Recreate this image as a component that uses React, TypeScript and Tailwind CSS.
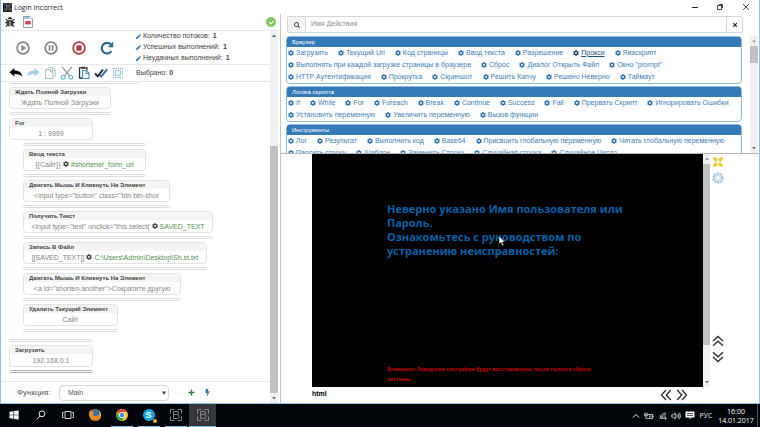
import type { ReactNode } from "react";
import clsx from "clsx";
import { FaBolt, FaBug, FaCheck, FaCog, FaPen, FaPlus, FaSearch, FaTimes } from "react-icons/fa";

type StepData = {
  title: string;
  value: string;
  target?: string;
  width: string;
};

type ActionItem = {
  label: string;
  hovered?: boolean;
};

type ActionGroup = {
  title: string;
  rows: ActionItem[][];
};

const loopSteps: StepData[] = [
  { title: "Ввод текста", value: "{{Сайт}}", target: "#shortener_form_url", width: "w-[123px]" },
  { title: "Двигать Мышь И Кликнуть На Элемент", value: '<input type="button" class="btn btn-shor', width: "w-[147px]" },
  { title: "Получить Текст", value: '<input type="text" onclick="this.select(', target: "SAVED_TEXT", width: "w-[190px]" },
  { title: "Запись В Файл", value: "[[SAVED_TEXT]]", target: "C:\\Users\\Admin\\Desktop\\Sh.st.txt", width: "w-[184px]" },
  { title: "Двигать Мышь И Кликнуть На Элемент", value: '<a id="shorten-another">Сократите другую', width: "w-[158px]" },
  { title: "Удалить Текущий Элемент", value: "Сайт", width: "w-[95px]" },
];

const groups: ActionGroup[] = [
  {
    title: "Браузер",
    rows: [
      [
        { label: "Загрузить" },
        { label: "Текущий Url" },
        { label: "Код страницы" },
        { label: "Ввод текста" },
        { label: "Разрешение" },
        { label: "Прокси", hovered: true },
        { label: "Яваскрипт" },
      ],
      [
        { label: "Выполнять при каждой загрузке страницы в браузере" },
        { label: "Сброс" },
        { label: "Диалог Открыть Файл" },
        { label: 'Окно "prompt"' },
      ],
      [
        { label: "HTTP Аутентификация" },
        { label: "Прокрутка" },
        { label: "Скриншот" },
        { label: "Решить Капчу" },
        { label: "Решено Неверно" },
        { label: "Таймаут" },
      ],
    ],
  },
  {
    title: "Логика скрипта",
    rows: [
      [
        { label: "If" },
        { label: "While" },
        { label: "For" },
        { label: "Foreach" },
        { label: "Break" },
        { label: "Continue" },
        { label: "Success" },
        { label: "Fail" },
        { label: "Прервать Скрипт" },
        { label: "Игнорировать Ошибки" },
      ],
      [{ label: "Установить переменную" }, { label: "Увеличить переменную" }, { label: "Вызов функции" }],
    ],
  },
  {
    title: "Инструменты",
    rows: [
      [
        { label: "Лог" },
        { label: "Результат" },
        { label: "Выполнить код" },
        { label: "Base64" },
        { label: "Присвоить глобальную переменную" },
        { label: "Читать глобальную переменную" },
      ],
      [
        { label: "Парсить строку" },
        { label: "Шаблон" },
        { label: "Заменить Строку" },
        { label: "Случайная строка" },
        { label: "Случайное Число" },
      ],
    ],
  },
];

const stats = [
  { label: "Количество потоков:", value: 1 },
  { label: "Успешных выполнений:", value: 1 },
  { label: "Неудачных выполнений:", value: 1 },
];

function IconButton({ label, className, children }: { label: string; className?: string; children: ReactNode }) {
  return (
    <button type="button" aria-label={label} className={clsx("flex shrink-0 items-center justify-center", className)}>
      {children}
    </button>
  );
}

function Scrollbar({ before, thumb, after, dim }: { before: string; thumb: string; after: string; dim?: boolean }) {
  return (
    <div className="flex h-full w-full flex-col items-center bg-[#f1f1f1]">
      <svg viewBox="0 0 8 8" className={clsx("my-px size-2 shrink-0", dim ? "fill-gray-400" : "fill-gray-600")}>
        <path d="M4 2.5 6 5H2z" />
      </svg>
      <div className={before} />
      <div className={clsx("w-full bg-[#c1c1c1]", thumb)} />
      <div className={after} />
      <svg viewBox="0 0 8 8" className="my-px size-2 shrink-0 fill-gray-500">
        <path d="M4 5.5 6 3H2z" />
      </svg>
    </div>
  );
}

function AppMark({ className }: { className?: string }) {
  return (
    <svg viewBox="0 0 14 14" fill="none" stroke="currentColor" className={className}>
      <path d="M1.5 5.5v-4h4M8.500 1.500h4v4M12.500 8.500v4h-4M5.500 12.500h-4v-4" />
      <path d="M4.500 3.500h3.500q1.500 0 1.500 1.500t-1.500 1.500H4.500zM4.500 6.500h4q1.500 0 1.500 2t-1.500 2h-4z" />
    </svg>
  );
}

function TitleBar() {
  return (
    <header className="flex h-3.5 shrink-0 items-center bg-white pl-0.5">
      <span className="flex size-[9px] items-center justify-center bg-[#1b1b1b] text-gray-400">
        <AppMark className="size-2" />
      </span>
      <h1 className="ml-0.5 flex-1 font-['Open_Sans'] text-[7px] leading-none text-gray-800">Login Incorrect</h1>
      <div className="flex text-gray-800">
        <IconButton label="Свернуть" className="w-[25px]">
          <svg viewBox="0 0 8 8" className="size-2" fill="none" stroke="currentColor">
            <path d="M1 4.5h6" />
          </svg>
        </IconButton>
        <IconButton label="Развернуть" className="w-[25px]">
          <svg viewBox="0 0 8 8" className="size-2" fill="none" stroke="currentColor">
            <path d="M1.5 2.5h4v4h-4zM3 1.5h3.5V5" strokeWidth="0.9" />
          </svg>
        </IconButton>
        <IconButton label="Закрыть" className="w-[27px]">
          <svg viewBox="0 0 8 8" className="size-2" fill="none" stroke="currentColor">
            <path d="m1 1 6 6M7 1 1 7" strokeWidth="0.8" />
          </svg>
        </IconButton>
      </div>
    </header>
  );
}

function PlaybackControls() {
  return (
    <div className="flex flex-1 items-center gap-3">
      <IconButton label="Запустить" className="size-4">
        <svg viewBox="0 0 16 16" className="size-4" fill="none" stroke="#858585" strokeWidth="1.7">
          <circle cx="8" cy="8" r="5.9" />
          <path d="M6.3 4.8v6.4L11.3 8z" fill="#858585" stroke="none" />
        </svg>
      </IconButton>
      <IconButton label="Пауза" className="size-4">
        <svg viewBox="0 0 16 16" className="size-4" fill="none" stroke="#858585" strokeWidth="1.7">
          <circle cx="8" cy="8" r="5.9" />
          <path d="M6.5 5.2v5.6M9.5 5.2v5.6" />
        </svg>
      </IconButton>
      <IconButton label="Остановить" className="size-4">
        <svg viewBox="0 0 16 16" className="size-4" fill="none" stroke="#b23a3a" strokeWidth="1.7">
          <circle cx="8" cy="8" r="5.9" />
          <path d="M5.4 5.4h5.2v5.2H5.4z" fill="#b23a3a" stroke="none" />
        </svg>
      </IconButton>
      <IconButton label="Перезапустить" className="size-4">
        <svg viewBox="0 0 16 16" className="size-4" fill="none" stroke="#2b6d8c" strokeWidth="2.2">
          <path d="M12.4 11.2A5.3 5.3 0 1 1 11.8 4.4" />
          <path d="M14.2 1.6v5.6H8.8z" fill="#2b6d8c" stroke="none" />
        </svg>
      </IconButton>
    </div>
  );
}

function EditControls() {
  return (
    <div className="flex flex-1 items-center gap-[3px]">
      <IconButton label="Отменить">
        <svg viewBox="0 0 14 12" className="h-3 w-3.5 fill-black">
          <path d="M.4 5.2 5.4 1v2.6c4 0 7.2 1.4 8 6.4-1.6-2.3-4-3-8-2.9v2.5z" />
        </svg>
      </IconButton>
      <IconButton label="Повторить">
        <svg viewBox="0 0 14 12" className="h-3 w-3.5 fill-[#a5d0e2]">
          <path d="M13.6 5.2 8.6 1v2.6c-4 0-7.2 1.4-8 6.4 1.6-2.3 4-3 8-2.9v2.5z" />
        </svg>
      </IconButton>
      <IconButton label="Копировать">
        <svg viewBox="0 0 14 14" className="size-3.5" fill="none" stroke="#b9c3c9">
          <path d="M5 3.500v-2h4.500l3 3v6h-2M9.500 1.500v3h3" />
          <path d="M2.500 3.500h5l2.500 2.500v6.500h-7.500zM7.500 3.500V6H10" stroke="#a9bfca" />
        </svg>
      </IconButton>
      <IconButton label="Вырезать">
        <svg viewBox="0 0 14 14" className="size-3.5" fill="none">
          <path d="m2.2.8 7.2 9M11.8.8l-7.2 9" stroke="#8d8d8d" strokeWidth="1.1" />
          <circle cx="3.2" cy="11.2" r="1.9" stroke="#6cb3da" strokeWidth="1.2" />
          <circle cx="10.8" cy="11.2" r="1.9" stroke="#6cb3da" strokeWidth="1.2" />
        </svg>
      </IconButton>
      <IconButton label="Вставить">
        <svg viewBox="0 0 14 14" className="size-3.5" fill="none">
          <path d="M5 12H2.5V1.8H10V4" stroke="#333" strokeWidth="1.3" />
          <path d="M4.3.8h4v1.8h-4z" fill="#333" />
          <path d="M5.5 4.5h4L12 7v5.500H5.5z" fill="#fff" stroke="#3f8fbb" strokeWidth="1.2" />
          <path d="M9 4.5v3h3" stroke="#3f8fbb" />
        </svg>
      </IconButton>
      <IconButton label="Проверить">
        <svg viewBox="0 0 14 14" className="size-3.5" fill="none" strokeWidth="1.9">
          <path d="m1 7.3 2.8 3L9 3.5" stroke="#222" />
          <path d="m5.8 9.2 1.4 1.4 6-7.5" stroke="#2e6f9e" />
        </svg>
      </IconButton>
      <IconButton label="Выделить всё">
        <svg viewBox="0 0 14 14" className="size-3.5" fill="none">
          <path d="M2.5 2.5h9v9h-9z" stroke="#8fa6b5" strokeDasharray="1.2 1" />
          <path d="M4.5 4.5h5v5h-5z" fill="#e6f3fa" stroke="#9fcbe2" />
        </svg>
      </IconButton>
    </div>
  );
}

function Connector({ width, active }: { width: string; active?: boolean }) {
  return (
    <div
      className={clsx("h-[3px] shrink-0 rounded-sm border bg-white", width, active ? "border-[#b3b3b3]" : "border-[#dcdcdc]")}
    />
  );
}

function StepCard({ title, value, target, width }: StepData) {
  return (
    <div className={clsx("flex h-[22px] shrink-0 flex-col overflow-hidden rounded-sm border border-[#e3e3e3] bg-white", width)}>
      <p className="h-2 shrink-0 bg-[#f4f4f4] pl-[5px] text-[6px] leading-2 font-bold whitespace-nowrap text-[#444]">{title}</p>
      <p className="flex flex-1 items-center justify-center gap-0.5 text-[7px] leading-none whitespace-nowrap text-[#858585]">
        <span>{value}</span>
        {target && (
          <>
            <FaCog className="size-1.5 text-[#444]" />
            <span className="text-[#519051]">{target}</span>
          </>
        )}
      </p>
    </div>
  );
}

function Script() {
  return (
    <div className="flex min-h-0 flex-1 flex-col overflow-hidden pl-2">
      <div className="-mt-px flex flex-col gap-[3px]">
        <Connector width="w-[131px]" />
        <StepCard title="Ждать Полной Загрузки" value="Ждать Полной Загрузки" width="w-[102px]" />
        <Connector width="w-[102px]" />
        <StepCard title="For" value="1 : 9999" width="w-[84px]" />
        <div className="mb-1 ml-3.5 flex flex-col gap-[3px]">
          <Connector width={loopSteps[0].width} />
          {loopSteps.map((step, i) => (
            <div key={i} className="flex flex-col gap-[3px]">
              <StepCard {...step} />
              <Connector width={step.width} />
            </div>
          ))}
        </div>
        <Connector width="w-[84px]" />
        <StepCard title="Загрузить" value="192.168.0.1" width="w-[84px]" />
        <Connector width="w-[84px]" active />
      </div>
    </div>
  );
}

function FunctionBar() {
  return (
    <div className="flex h-[22px] shrink-0 items-center border-t border-gray-200 pl-4">
      <label htmlFor="function" className="w-[42px] text-[8px] text-[#555]">
        Функция:
      </label>
      <div className="relative">
        <select
          id="function"
          className="block h-4 w-[110px] appearance-none rounded-sm border border-gray-300 bg-white pt-px pl-2 text-[7px] text-[#555]"
        >
          <option>Main</option>
        </select>
        <svg viewBox="0 0 6 6" className="pointer-events-none absolute top-[5px] right-0.5 size-1.5 fill-gray-700">
          <path d="M1 1.5h4L3 5z" />
        </svg>
      </div>
      <IconButton label="Добавить функцию" className="ml-4 w-3">
        <FaPlus className="size-[7px] text-[#2f7a35]" />
      </IconButton>
      <IconButton label="Вызвать функцию" className="ml-1 w-3">
        <FaBolt className="size-[7px] text-[#2f79bd]" />
      </IconButton>
    </div>
  );
}

function ScriptPanel() {
  return (
    <aside className="flex w-[280px] shrink-0 flex-col border-r border-[#c4c4c4]">
      <div className="flex h-[17px] shrink-0 items-center gap-2 border-b border-gray-200 pr-1 pl-1">
        <IconButton label="Отладка">
          <FaBug className="size-[10px] text-[#333]" />
        </IconButton>
        <IconButton label="Журнал">
          <svg viewBox="0 0 10 12" className="h-3 w-2.5" fill="none">
            <path d="M.5.5H7L9.500 3v8.500h-9z" fill="#f7fafc" stroke="#8ca3b5" />
            <path d="M1 1h5.500v2H1z" fill="#a9c3d8" />
            <path d="M2.3 5h5.400v3.400H2.300z" fill="#cf4650" />
          </svg>
        </IconButton>
        <span className="ml-auto flex size-[10px] items-center justify-center rounded-full bg-[#84c55f]">
          <FaCheck className="size-[5px] text-white" />
        </span>
      </div>
      <div className="flex min-h-0 flex-1 pr-0.5">
        <div className="flex min-w-0 flex-1 flex-col">
          <div className="flex h-[34px] shrink-0 items-center border-b border-gray-200 pl-3.5">
            <PlaybackControls />
            <ul className="w-[134px]">
              {stats.map((stat) => (
                <li key={stat.label} className="flex h-[11px] items-center gap-0.5 text-[7px] text-[#444]">
                  <FaPen className="size-[5px] text-[#3d7fb5]" />
                  <span>{stat.label}</span>
                  <b className="ml-px">{stat.value}</b>
                </li>
              ))}
            </ul>
          </div>
          <div className="flex h-[17px] shrink-0 items-center border-b border-gray-200 pl-2">
            <EditControls />
            <p className="w-[134px] text-[7px] text-[#444]">
              Выбрано: <b>0</b>
            </p>
          </div>
          <Script />
          <FunctionBar />
        </div>
        <div className="w-2 shrink-0">
          <Scrollbar before="grow-[105]" thumb="grow-[247]" after="grow-0" />
        </div>
      </div>
    </aside>
  );
}

function ActionCard({ title, rows }: ActionGroup) {
  return (
    <section className="shrink-0 rounded-sm border border-[#8db9de] bg-white">
      <h2 className="h-[10px] rounded-t-xs bg-[#337ab7] pl-[5px] text-[6px] leading-[10px] font-normal text-white">{title}</h2>
      {rows.map((row, i) => (
        <div key={i} className="flex h-3 items-center gap-[10px] pl-px text-[7px] whitespace-nowrap">
          {row.map((item) => (
            <a
              key={item.label}
              href="#"
              className={clsx("flex items-center", item.hovered ? "text-[#23527c] underline" : "text-[#4080b8] hover:underline")}
            >
              <FaCog className={clsx("mr-0.5 size-1.5", item.hovered ? "text-[#174066]" : "text-[#2a70ad]")} />
              {item.label}
            </a>
          ))}
        </div>
      ))}
    </section>
  );
}

function ActionsPanel() {
  return (
    <section className="flex min-h-0 shrink-0 basis-[36%] flex-col border-b border-[#b5b5b5]">
      <div className="mt-0.5 mr-4 ml-1.5 flex h-[17px] shrink-0 rounded-xs border border-gray-300">
        <IconButton label="Найти" className="w-[18px] border-r border-gray-300 bg-gray-100">
          <FaSearch className="size-1.5 text-[#444]" />
        </IconButton>
        <input
          type="text"
          aria-label="Имя действия"
          placeholder="Имя Действия"
          className="min-w-0 flex-1 pl-[5px] text-[7px] outline-none placeholder:text-[#8c8c8c]"
        />
        <IconButton label="Очистить" className="w-4 border-l border-gray-300">
          <FaTimes className="size-1.5 text-[#222]" />
        </IconButton>
      </div>
      <div className="mt-[3px] flex min-h-0 flex-1 gap-2 pr-px">
        <div className="flex min-w-0 flex-1 flex-col gap-0.5 overflow-hidden pl-[5px]">
          {groups.map((group) => (
            <ActionCard key={group.title} {...group} />
          ))}
        </div>
        <div className="w-2 shrink-0">
          <Scrollbar before="grow-0" thumb="grow-[17]" after="grow-[82]" dim />
        </div>
      </div>
    </section>
  );
}

function DoubleChevron({ className }: { className?: string }) {
  return (
    <svg viewBox="0 0 12 12" className={clsx("size-3", className)} fill="none" stroke="#333" strokeWidth="1.4">
      <path d="m1 6 5-4.5L11 6M1 10.8l5-4.5 5 4.5" />
    </svg>
  );
}

function BrowserPanel() {
  return (
    <section className="flex min-h-0 flex-1 pl-[31px]">
      <div className="flex min-w-0 flex-1 flex-col">
        <div className="flex min-h-0 flex-1">
          <div className="relative flex min-w-0 flex-1 flex-col justify-between overflow-hidden bg-black pt-12 pr-[75px] pl-[75px] font-['Open_Sans',sans-serif] font-bold">
            <p className="w-[240px] text-[11px] leading-3.5 text-[#0660a6]">
              Неверно указано Имя пользователя или Пароль.
              <br />
              Ознакомьтесь с руководством по устранению неисправностей:
            </p>
            <p className="w-[216px] pb-[3px] text-[5px] leading-[10px] text-[#c00000]">
              Внимание: Заводские настройки будут восстановлены после полного сброса системы.
            </p>
            <svg viewBox="0 0 8 12" className="absolute top-[81px] left-[186px] h-3 w-2 fill-white stroke-black" strokeWidth="0.5">
              <path d="M1 .8v8.400l2-1.800 1.400 3.300 1.400-.6L4.400 6.900H7z" />
            </svg>
          </div>
          <div className="w-[7px] shrink-0">
            <Scrollbar before="grow-0" thumb="grow-[185]" after="grow-[33]" dim />
          </div>
        </div>
        <div className="flex h-4 shrink-0 items-center justify-between pr-[22px]">
          <span className="pb-1 text-[7px] leading-none font-bold text-black">html</span>
          <div className="flex gap-1">
            <IconButton label="Прокрутить влево">
              <DoubleChevron className="-rotate-90" />
            </IconButton>
            <IconButton label="Прокрутить вправо">
              <DoubleChevron className="rotate-90" />
            </IconButton>
          </div>
        </div>
      </div>
      <div className="flex w-[49px] shrink-0 flex-col items-start gap-1 pt-0.5 pb-10 pl-0.5">
        <IconButton label="Свернуть браузер">
          <svg viewBox="0 0 12 12" className="size-3 fill-[#f3c51b]">
            <path d="M5.300 5.300V1.500L4.200 2.600 2.300.8.8 2.300l1.800 1.900-1.100 1.100zM6.700 5.300V1.500l1.100 1.100L9.700.8l1.500 1.500-1.800 1.900 1.100 1.100zM5.300 6.700v3.800L4.200 9.400l-1.900 1.800-1.500-1.500 1.800-1.900-1.100-1.100zM6.700 6.700v3.800l1.100-1.100 1.900 1.800 1.500-1.500-1.800-1.900 1.100-1.100z" />
          </svg>
        </IconButton>
        <IconButton label="Настройки">
          <svg viewBox="0 0 12 12" className="size-3" fill="none" stroke="#8fc0de">
            <circle cx="6" cy="6" r="4.9" strokeWidth="1.3" strokeDasharray="2 1.08" />
            <circle cx="6" cy="6" r="4" strokeWidth="0.7" />
            <circle cx="6" cy="6" r="2.5" strokeWidth="0.6" />
          </svg>
        </IconButton>
        <IconButton label="Прокрутить вверх" className="mt-auto">
          <DoubleChevron />
        </IconButton>
        <IconButton label="Прокрутить вниз">
          <DoubleChevron className="rotate-180" />
        </IconButton>
      </div>
    </section>
  );
}

function TaskButton({ label, running, active, children }: { label: string; running?: boolean; active?: boolean; children: ReactNode }) {
  return (
    <button
      type="button"
      aria-label={label}
      className={clsx("flex w-[27px] flex-col items-center", active && "bg-[#35373a]")}
    >
      <span className="flex flex-1 items-center">{children}</span>
      <span className={clsx("h-px", active ? "w-full" : "w-[22px]", running && "bg-[#76b9ed]")} />
    </button>
  );
}

function Taskbar() {
  return (
    <footer className="flex h-[23px] shrink-0 bg-[#020509] text-gray-200">
      <TaskButton label="Пуск">
        <svg viewBox="0 0 10 10" className="size-[10px] fill-white">
          <path d="M.5 1.800 4.500 1.200v3.500h-4zM5.100 1.100 9.700.4v4.300H5.100zM.5 5.300h4v3.500l-4-.6zM5.100 5.300h4.600v4.300l-4.600-.7z" />
        </svg>
      </TaskButton>
      <TaskButton label="Поиск">
        <svg viewBox="0 0 10 10" className="size-[10px]" fill="none" stroke="currentColor">
          <circle cx="6" cy="3.8" r="2.9" />
          <path d="M4 6 .8 9.4" />
        </svg>
      </TaskButton>
      <TaskButton label="Представление задач">
        <svg viewBox="0 0 12 10" className="h-[10px] w-3" fill="none" stroke="currentColor">
          <path d="M3 1.5h6v7H3zM1.800 2.500H.6v5h1.200M10.200 2.500h1.200v5h-1.200" strokeWidth="0.9" />
        </svg>
      </TaskButton>
      <TaskButton label="Firefox">
        <svg viewBox="0 0 14 14" className="size-3.5">
          <circle cx="7" cy="7" r="6" fill="#e2701c" />
          <circle cx="7.6" cy="5.5" r="4" fill="#2f6fb4" />
          <path d="M1.200 4c.5-1 1-1.600 1.600-2 .2.800.7 1.300 1.500 1.500 1.200.1 1.600.6 1.800 1.200L4.800 6c.3 1.800 1.800 2.700 3.400 2.200 1.300-.4 2.200-1.200 2.400-2.500 1 2.200-.2 5.200-3.200 5.800C4 12 1 9.500 1.200 4z" fill="#ee8a1f" />
          <path d="M10.300 1.900c2.200 1.300 3 4 2.600 6-.5 2.700-2.600 4.700-5.400 5 3-1.300 4.600-3.400 4.400-6 0-2-.6-3.500-1.600-5z" fill="#f8c63c" />
        </svg>
      </TaskButton>
      <TaskButton label="Chrome" running>
        <svg viewBox="0 0 14 14" className="size-3.5">
          <circle cx="7" cy="7" r="6" fill="#f6c929" />
          <path d="M7 7 1.800 4A6 6 0 0 1 12.200 4H7z" fill="#dd4b3e" />
          <path d="M1.800 4A6 6 0 0 0 6.600 13L9.500 8.500 4.400 8.500z" fill="#2fa355" />
          <circle cx="7" cy="7" r="2.9" fill="#fff" />
          <circle cx="7" cy="7" r="2.2" fill="#4285f4" />
        </svg>
      </TaskButton>
      <TaskButton label="Skype" running>
        <span className="relative flex size-3 items-center justify-center rounded-full bg-[#12a5e6] text-[9px] leading-none font-bold text-white">
          S
          <span className="absolute -right-0.5 -bottom-0.5 size-1 rounded-full bg-[#f7b924]" />
        </span>
      </TaskButton>
      <TaskButton label="Редактор" running>
        <AppMark className="size-3.5 text-[#858585]" />
      </TaskButton>
      <TaskButton label="Login Incorrect" running active>
        <AppMark className="size-3.5 text-[#858585]" />
      </TaskButton>
      <div className="ml-auto flex items-center">
        <IconButton label="Скрытые значки" className="w-[13px]">
          <svg viewBox="0 0 8 8" className="size-2" fill="none" stroke="currentColor">
            <path d="m1 5.5 3-3 3 3" />
          </svg>
        </IconButton>
        <IconButton label="Батарея" className="w-3.5">
          <svg viewBox="0 0 10 8" className="h-2 w-[10px]" fill="none" stroke="currentColor" strokeWidth="0.8">
            <path d="M4 2.500h4.500v4H3M9.300 3.700v1.600M1 .5v1.800M3 .5v1.800M.6 2.300h2.800v1.500H.6zM2 3.800v3.400M5.500 3.500v2M7 3.500v2" />
          </svg>
        </IconButton>
        <IconButton label="Сеть" className="w-[13px]">
          <svg viewBox="0 0 8 8" className="size-2" fill="none" stroke="currentColor" strokeWidth="0.8">
            <path d="M1 7a6 6 0 0 1 6-6M2.800 7A4.200 4.200 0 0 1 7 2.800M4.600 7A2.400 2.400 0 0 1 7 4.600M1 3.500 4 7" />
            <circle cx="6.6" cy="6.6" r="0.6" fill="currentColor" />
          </svg>
        </IconButton>
        <IconButton label="Громкость" className="w-3.5">
          <svg viewBox="0 0 10 8" className="h-2 w-[10px]" fill="none" stroke="currentColor" strokeWidth="0.8">
            <path d="M.8 2.800h1.500L4.300 1v6L2.300 5.200H.8zM5.600 2.700q1 1.300 0 2.600M7 1.700q1.700 2.300 0 4.600M8.300.7q2.400 3.300 0 6.600" />
          </svg>
        </IconButton>
        <IconButton label="Уведомления" className="w-[13px]">
          <svg viewBox="0 0 10 9" className="h-[9px] w-[10px]">
            <path d="M.5.5h9v6H6L4.500 8.500v-2h-4z" fill="#fff" />
            <path d="M2 2.500h6M2 4.500h6" stroke="#111" strokeWidth="0.7" />
          </svg>
        </IconButton>
        <button type="button" className="w-5 pt-px font-['Open_Sans'] text-[7px]">
          РУС
        </button>
        <time className="w-10 text-center font-['Open_Sans'] text-[7px] leading-[9px] text-white" dateTime="2017-01-14T16:00">
          16:00
          <br />
          14.01.2017
        </time>
        <span className="ml-px h-full w-[3px] border-l border-gray-600" />
      </div>
    </footer>
  );
}

export default function App() {
  return (
    <div className="flex h-screen flex-col overflow-hidden bg-white font-['Liberation_Sans',Arial,sans-serif]">
      <div className="flex min-h-0 flex-1 flex-col border-x border-b border-[#8dc3ea]">
        <TitleBar />
        <main className="flex min-h-0 flex-1">
          <ScriptPanel />
          <div className="flex min-w-0 flex-1 flex-col">
            <ActionsPanel />
            <BrowserPanel />
          </div>
        </main>
      </div>
      <Taskbar />
    </div>
  );
}
